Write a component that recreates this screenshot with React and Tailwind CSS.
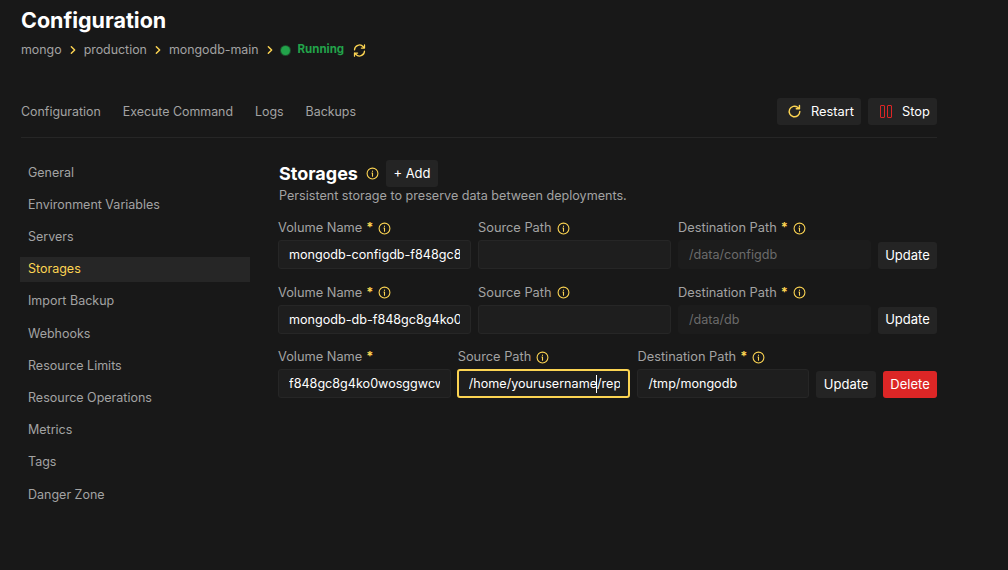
// Storages configuration page
import React from 'react';

const sideItems = [
  'General',
  'Environment Variables',
  'Servers',
  'Storages',
  'Import Backup',
  'Webhooks',
  'Resource Limits',
  'Resource Operations',
  'Metrics',
  'Tags',
  'Danger Zone',
];

function InfoIcon({ className }) {
  return (
    <svg viewBox="0 0 24 24" fill="none" stroke="#fcd452" strokeWidth="2" strokeLinecap="round" className={className}>
      <circle cx="12" cy="12" r="10" />
      <path d="M12 11v6M11 11h1M12 7.5v.5" />
    </svg>
  );
}

function Chevron() {
  return (
    <svg viewBox="0 0 24 24" fill="none" stroke="#fcd452" strokeWidth="3.5" strokeLinecap="round" strokeLinejoin="round" className="w-[10px] h-[10px]">
      <path d="M8 4l8 8-8 8" />
    </svg>
  );
}

function Field({ label, required, info = true, value, disabled, focused, className }) {
  return (
    <div className={`flex flex-col ${className}`}>
      <div className="flex items-center h-[18px] mb-[3px] text-[12.8px] text-[#a3a3a3]">
        <span>{label}</span>
        {required && <span className="ml-[4px] text-[#fcd452] font-bold">*</span>}
        {info && <InfoIcon className="w-[13px] h-[13px] ml-[5px]" />}
      </div>
      <div className={focused ? 'relative -ml-px' : 'relative'}>
        <input
          readOnly
          value={value}
          className={`w-full h-[29px] rounded-[3px] text-[12.6px] outline-none ${
            focused
              ? 'pl-[10px] pr-[8px] bg-[#1e1e1e] border-2 border-[#fcd452] text-white'
              : disabled
                ? 'pl-[10px] pr-[10px] bg-[#1c1c1c] border border-[#1c1c1c] text-[#6b6b6b]'
                : 'pl-[10px] pr-[10px] bg-[#1e1e1e] border border-[#262626] text-white'
          }`}
        />
        {focused && <span className="absolute left-[139px] top-[6px] w-px h-[18px] bg-white" />}
      </div>
    </div>
  );
}

function SmallButton({ children, className }) {
  return (
    <button className={`h-[27px] rounded-[3px] text-[13px] ${className}`}>{children}</button>
  );
}

function StorageRow({ volume, source, destination }) {
  return (
    <div className="flex items-end gap-[7px] mb-[14.5px]">
      <Field label="Volume Name" required value={volume} className="w-[193px]" />
      <Field label="Source Path" value={source} disabled={false} className="w-[193px]" />
      <Field label="Destination Path" required value={destination} disabled className="w-[193px]" />
      <SmallButton className="w-[59px] bg-[#242424] text-white">Update</SmallButton>
    </div>
  );
}

export default function App() {
  return (
    <div className="w-[1008px] h-[570px] overflow-hidden bg-[#181818] text-white font-['Inter',sans-serif]">
      <div className="w-[916px] ml-[21px]">
        <h1 className="pt-[7px] text-[21.5px] leading-[26px] font-bold">Configuration</h1>
        <div className="flex items-center h-[20px] mt-[7px] text-[12.4px] text-[#a3a3a3]">
          <span>mongo</span>
          <span className="mx-[6px]"><Chevron /></span>
          <span>production</span>
          <span className="mx-[6px]"><Chevron /></span>
          <span>mongodb-main</span>
          <span className="mx-[6px]"><Chevron /></span>
          <span className="w-[9px] h-[9px] rounded-full bg-[#22a34a] ring-1 ring-[#22a34a]/40" />
          <span className="ml-[8px] text-[11.5px] font-bold text-[#22a34a]">Running</span>
          <svg viewBox="0 0 24 24" fill="none" stroke="#fcd452" strokeWidth="2" strokeLinecap="round" strokeLinejoin="round" className="w-[15px] h-[15px] ml-[8px]">
            <path d="M4 11a8 8 0 0 1 14-5l2 2M20 3v5h-5M20 13a8 8 0 0 1-14 5l-2-2M4 21v-5h5" />
          </svg>
        </div>

        <div className="flex items-center justify-between mt-[38px] pb-[12px] border-b border-[#262626]">
          <div className="flex items-center gap-[22px] pt-[2px] text-[12.4px] text-[#a3a3a3]">
            <span>Configuration</span>
            <span>Execute Command</span>
            <span>Logs</span>
            <span>Backups</span>
          </div>
          <div className="flex items-center gap-[7px] text-[12.8px]">
            <button className="flex items-center gap-[8px] h-[27px] w-[84px] pl-[9px] rounded-[3px] bg-[#242424]">
              <svg viewBox="0 0 24 24" fill="none" stroke="#fcd452" strokeWidth="2" strokeLinecap="round" strokeLinejoin="round" className="w-[17px] h-[17px]">
                <path d="M19.5 12a7.5 7.5 0 1 1-3-6l2 2M19 3.5V8h-4.5" />
              </svg>
              Restart
            </button>
            <button className="flex items-center gap-[10px] h-[27px] w-[69px] pl-[12px] rounded-[3px] bg-[#242424]">
              <svg viewBox="0 0 12 13" fill="none" stroke="#dc2626" strokeWidth="1" className="w-[12px] h-[13px]">
                <rect x="0.5" y="0.5" width="4" height="12" rx="0.5" />
                <rect x="7.5" y="0.5" width="4" height="12" rx="0.5" />
              </svg>
              Stop
            </button>
          </div>
        </div>

        <div className="flex mt-[19px]">
          <nav className="w-[230px] -ml-px mt-[3.5px] shrink-0 flex flex-col text-[12.5px] text-[#a3a3a3]">
            {sideItems.map((item) => (
              <a
                key={item}
                className={`h-[25px] mb-[7.2px] pl-[8px] flex items-center ${
                  item === 'Storages' ? 'bg-[#262626] text-[#fcd452]' : ''
                }`}
              >
                {item}
              </a>
            ))}
          </nav>

          <main className="ml-[28px] w-[659px] -mr-px">
            <div className="flex items-center h-[27px] mt-[3px] pl-px">
              <h2 className="text-[18px] font-bold">Storages</h2>
              <InfoIcon className="w-[13px] h-[13px] ml-[8px]" />
              <button className="ml-[7px] w-[52px] h-[27px] rounded-[3px] bg-[#242424] text-[13px]">+ Add</button>
            </div>
            <p className="mb-[14px] pl-px text-[12.6px] leading-[18px] text-[#a3a3a3]">
              Persistent storage to preserve data between deployments.
            </p>

            <StorageRow volume="mongodb-configdb-f848gc8g4ko0wosggwcw" source="" destination="/data/configdb" />
            <StorageRow volume="mongodb-db-f848gc8g4ko0wosggwcw" source="" destination="/data/db" />

            <div className="flex items-end gap-[7px]">
              <Field label="Volume Name" required info={false} value="f848gc8g4ko0wosggwcw" className="w-[173px]" />
              <Field label="Source Path" value="/home/yourusername/rep" focused className="w-[173px]" />
              <Field label="Destination Path" required value="/tmp/mongodb" className="w-[172px]" />
              <SmallButton className="w-[60px] bg-[#242424] text-white">Update</SmallButton>
              <SmallButton className="w-[54px] bg-[#dc2626] text-white">Delete</SmallButton>
            </div>
          </main>
        </div>
      </div>
    </div>
  );
}
